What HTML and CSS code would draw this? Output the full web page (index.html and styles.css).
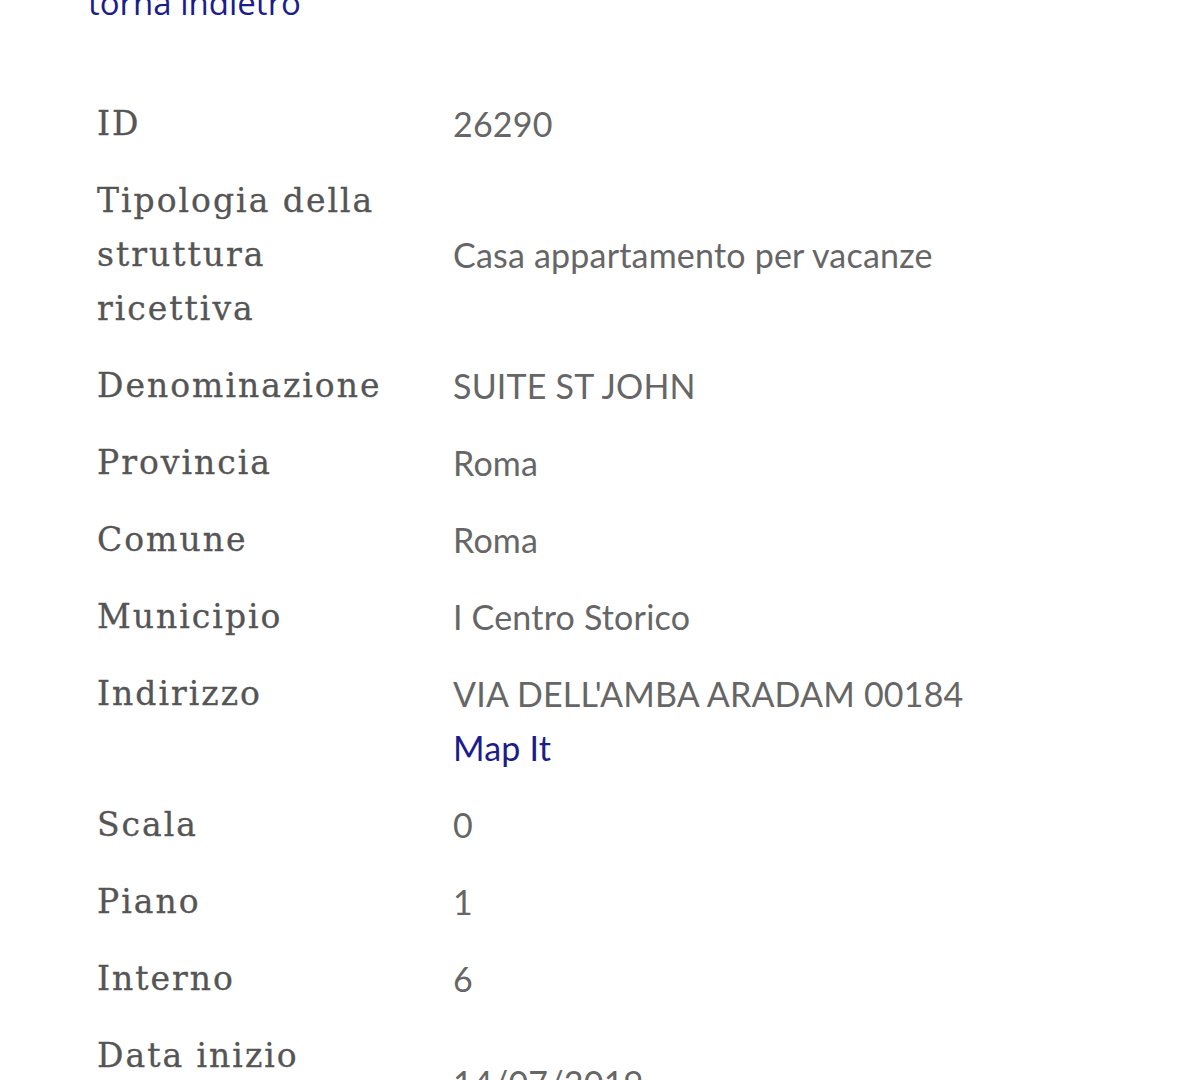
FILE: index.html
```html
<!DOCTYPE html>
<html lang="it">
<head>
    <meta charset="UTF-8">
    <meta name="viewport" content="width=device-width, initial-scale=1.0">
    <title>Dettaglio struttura ricettiva</title>
    <link rel="stylesheet" href="styles.css">
</head>
<body>

<div class="page">
    <a class="back-link" href="#">torna indietro</a>

    <div class="details">
        <div class="row">
            <div class="label">ID</div>
            <div class="value">26290</div>
        </div>
        <div class="row">
            <div class="label">Tipologia della struttura ricettiva</div>
            <div class="value">Casa appartamento per vacanze</div>
        </div>
        <div class="row">
            <div class="label">Denominazione</div>
            <div class="value">SUITE ST JOHN</div>
        </div>
        <div class="row">
            <div class="label">Provincia</div>
            <div class="value">Roma</div>
        </div>
        <div class="row">
            <div class="label">Comune</div>
            <div class="value">Roma</div>
        </div>
        <div class="row">
            <div class="label">Municipio</div>
            <div class="value">I Centro Storico</div>
        </div>
        <div class="row top">
            <div class="label">Indirizzo</div>
            <div class="value">
                VIA DELL'AMBA ARADAM 00184<br>
                <a class="map-link" href="#">Map It</a>
            </div>
        </div>
        <div class="row">
            <div class="label">Scala</div>
            <div class="value">0</div>
        </div>
        <div class="row">
            <div class="label">Piano</div>
            <div class="value">1</div>
        </div>
        <div class="row">
            <div class="label">Interno</div>
            <div class="value">6</div>
        </div>
        <div class="row">
            <div class="label">Data inizio attività</div>
            <div class="value">14/07/2019</div>
        </div>
    </div>
</div>

</body>
</html>
```

FILE: styles.css
```css
body {
    margin: 0;
    background: #fff;
    color: #666;
}
.page {
    padding: 0 0 40px 88px;
}
.back-link {
    display: block;
    margin-top: -19px;
    font-family: "Open Sans", sans-serif;
    font-size: 33px;
    line-height: 44px;
    color: #1c1c8c;
    text-decoration: none;
}
.details {
    margin-top: 60px;
    margin-left: 9px;
}
.row {
    display: grid;
    grid-template-columns: 356px 1fr;
    align-items: center;
    padding: 11.5px 0;
}
.row.top {
    align-items: start;
}
.label {
    font-family: "DejaVu Serif", serif;
    font-size: 33px;
    line-height: 54px;
    letter-spacing: 2px;
    width: 300px;
    color: #555;
    -webkit-text-stroke: 0.3px #555;
}
.value {
    font-family: Lato, sans-serif;
    font-size: 34px;
    line-height: 54px;
    letter-spacing: 0.2px;
    color: #666;
}
.map-link {
    color: #1c1c8c;
    text-decoration: none;
}
```
